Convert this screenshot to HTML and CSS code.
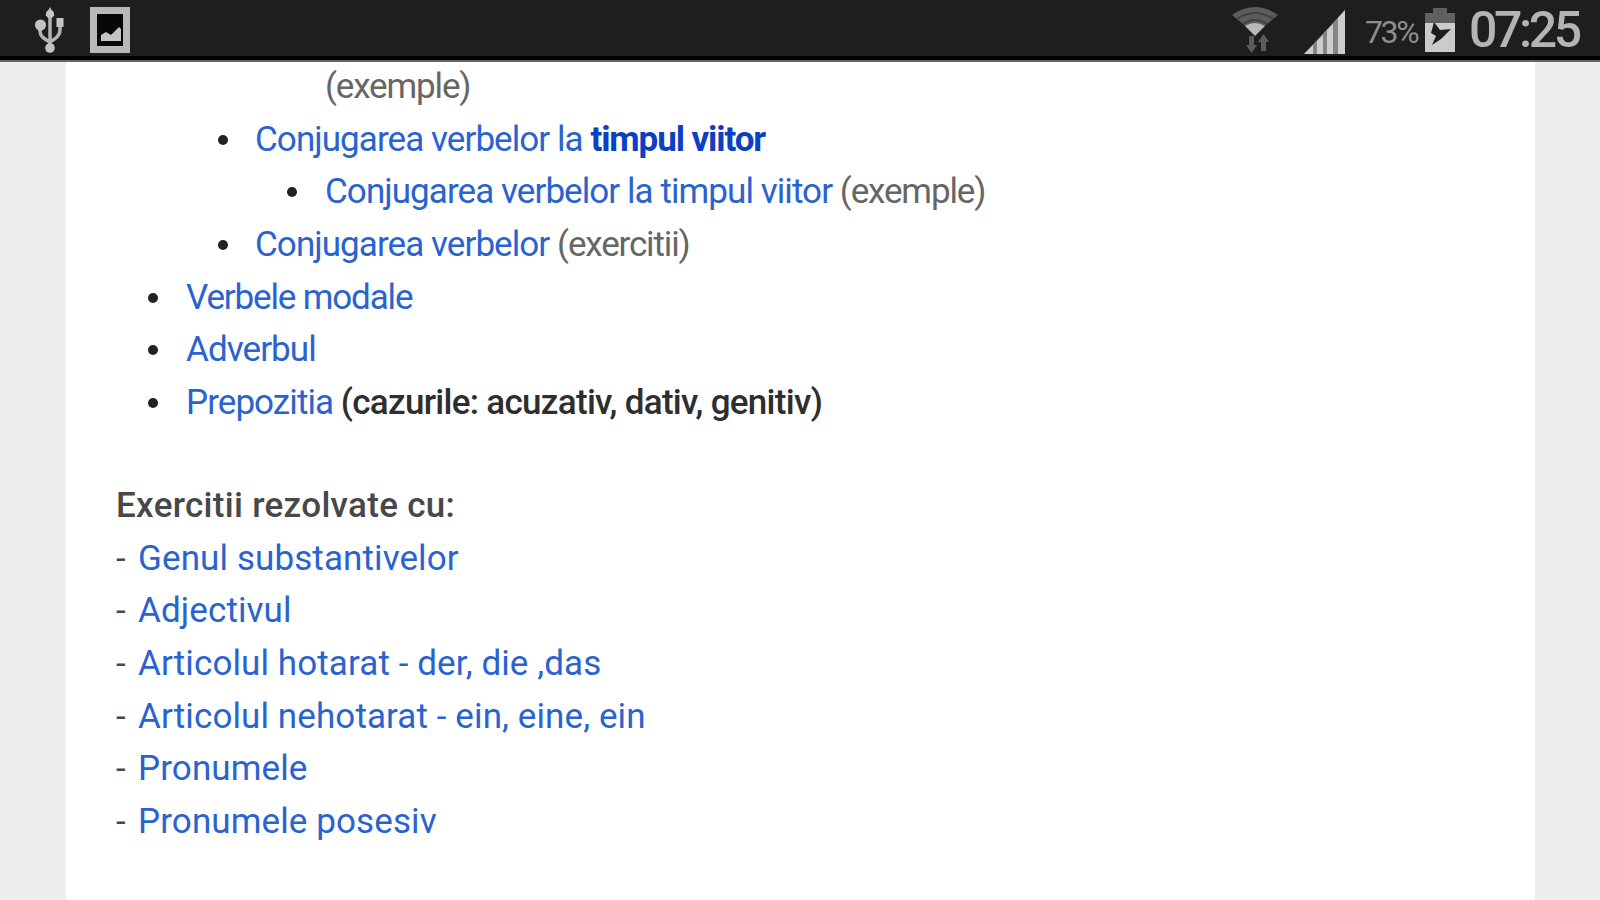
FILE: index.html
```
<!DOCTYPE html>
<html lang="ro">
<head>
  <meta charset="UTF-8" />
  <meta name="viewport" content="width=device-width, initial-scale=1.0"/>
  <title>Gramatica</title>
  <link rel="stylesheet" href="styles.css">
</head>
<body>

  <header class="status-bar">
    <div class="status-left">
      <svg class="usb" width="30" height="48" viewBox="0 0 30 48">
        <path d="M15 7V43M5 19v5c0 6 5 8 10 11M25 15v8c0 6-5 9-10 12"/>
        <path class="fill" d="M15 0l4.5 9h-9z"/>
        <circle class="fill" cx="15" cy="7" r="4"/>
        <circle class="fill" cx="5.500" cy="18" r="5.500"/>
        <rect class="fill" x="21.500" y="11" width="7" height="9"/>
        <circle class="fill" cx="15" cy="41" r="4.800"/>
      </svg>
      <svg class="picture" width="40" height="46" viewBox="0 0 40 46">
        <rect x="3.500" y="3.500" width="33" height="39"/>
        <path class="fill" d="M11 34V28l5-3 5 3 8-8 2 2v12z"/>
      </svg>
    </div>
    <div class="status-right">
      <svg class="wifi" width="46" height="48" viewBox="0 0 46 48">
        <path class="dim" d="M0 9Q23-7 46 9L29 23Q23 19 17 23z"/>
        <path class="gap" d="M5 13Q23 1 41 13M11 18Q23 10 35 18"/>
        <path class="lit" d="M13 20Q23 14 33 20L23 30z"/>
        <path class="dim" d="M17 30h5v9h3l-5.500 8-5.500-8h3zM29 45h5V36h3l-5.500-8-5.500 8h3z"/>
      </svg>
      <svg class="signal" width="42" height="44" viewBox="0 0 42 44">
        <path class="shade" d="M0 44L41 0V44z"/>
        <path class="bar" d="M0 44l9-9v9zM13 31l6-6v19h-6zM23 20l6-6v30h-6zM34 8l7-8v44h-7z"/>
      </svg>
      <span class="percent">73%</span>
      <svg class="battery" width="30" height="44" viewBox="0 0 30 44">
        <path class="empty" d="M0 15V5h8V0h14v5h8v10z"/>
        <path class="full" d="M0 15h30v29H0z"/>
        <path class="bolt" d="M9 14l6 8 11-1-10 10-9 6 4-9-5-3z"/>
      </svg>
      <span class="clock">07:25</span>
    </div>
  </header>

  <main class="page">
    <ul class="level1">
      <li class="open">
        <ul class="level2">
          <li class="open">
            <ul class="level3">
              <li class="open"><span class="note">(exemple)</span></li>
            </ul>
          </li>
          <li><a>Conjugarea verbelor la <b>timpul viitor</b></a>
            <ul class="level3">
              <li><a>Conjugarea verbelor la timpul viitor</a> <span class="note">(exemple)</span></li>
            </ul>
          </li>
          <li><a>Conjugarea verbelor</a> <span class="note">(exercitii)</span></li>
        </ul>
      </li>
      <li><a class="tight">Verbele modale</a></li>
      <li><a>Adverbul</a></li>
      <li><a>Prepozitia</a> <span class="cases">(cazurile: acuzativ, dativ, genitiv)</span></li>
    </ul>

    <h2 class="title">Exercitii rezolvate cu:</h2>
    <div class="exercises">
      <p>- <a>Genul substantivelor</a></p>
      <p>- <a>Adjectivul</a></p>
      <p>- <a>Articolul hotarat - der, die ,das</a></p>
      <p>- <a>Articolul nehotarat - ein, eine, ein</a></p>
      <p>- <a>Pronumele</a></p>
      <p>- <a>Pronumele posesiv</a></p>
    </div>
  </main>

</body>
</html>
```

FILE: styles.css
```
* {
  margin: 0; padding: 0; box-sizing: border-box;
}
body {
  font-family: Roboto, sans-serif;
  background: #eee;
  height: 900px;
  overflow: hidden;
  display: flex;
  flex-direction: column;
}

/* status bar */
.status-bar {
  flex: none;
  height: 62px;
  background: #1e1e1e;
  border-bottom: 2px solid #666;
  box-shadow: inset 0 -4px 0 #000;
  display: flex;
  justify-content: space-between;
  padding: 0 20px 0 35px;
}
.status-left, .status-right {
  display: flex;
  align-items: flex-start;
}
.usb { margin-top: 7px; fill: none; stroke: #b4b4b4; stroke-width: 3.5; }
.usb .fill { fill: #c4c4c4; stroke: none; }
.picture { margin: 7px 0 0 25px; fill: #080808; stroke: #b9b9b9; stroke-width: 7; }
.picture .fill { fill: #c4c4c4; stroke: none; }
.wifi { margin-top: 6px; }
.wifi .dim { fill: #5c5c5c; }
.wifi .gap { fill: none; stroke: #414141; stroke-width: 2; }
.wifi .lit { fill: #b8b8b8; }
.signal { margin: 10px 0 0 26px; }
.signal .shade { fill: #858585; }
.signal .bar { fill: #cdcdcd; }
.percent {
  width: 54px;
  margin: 14px 0 0 19px;
  font-size: 32px;
  line-height: 36px;
  letter-spacing: -2.4px;
  color: #8e8e8e;
}
.battery { margin: 8px 0 0 6px; }
.battery .empty { fill: #606060; }
.battery .full { fill: #cbcbcb; }
.battery .bolt { fill: #1e1e1e; }
.clock {
  width: 111px;
  margin: 0 0 0 14px;
  font-size: 50px;
  font-weight: 500;
  line-height: 61px;
  letter-spacing: -3.4px;
  color: #b4b4b4;
}

/* content */
.page {
  flex: 1;
  width: 1469px;
  margin-left: 66px;
  padding-left: 50px;
  background: #fff;
  font-size: 35px;
  line-height: 52.64px;
  color: #484848;
  white-space: nowrap;
}
ul { list-style: none; }
.level1 {
  margin-top: -1px;
  letter-spacing: -0.93px;
}
.level1 > li { padding-left: 70px; }
.level2 > li { padding-left: 69px; }
.level3 > li { padding-left: 70px; }
li { position: relative; }
li::before {
  content: "";
  position: absolute;
  left: 32px;
  top: 21px;
  width: 10px;
  height: 10px;
  border-radius: 50%;
  background: #222;
}
.open::before { display: none; }
a { color: #2a63cf; }
b { color: #0b40c4; letter-spacing: -1.1px; }
.tight { letter-spacing: -1.15px; }
.note { color: #666; letter-spacing: -1.15px; }
.cases { color: #2e2e2e; font-weight: 500; letter-spacing: -0.7px; }
.title {
  margin-top: 50.64px;
  font-size: 35px;
  line-height: 52.64px;
  font-weight: 500;
  letter-spacing: 0.3px;
}
.exercises { letter-spacing: 0.1px; }
.exercises a { margin-left: 3.5px; }
```
